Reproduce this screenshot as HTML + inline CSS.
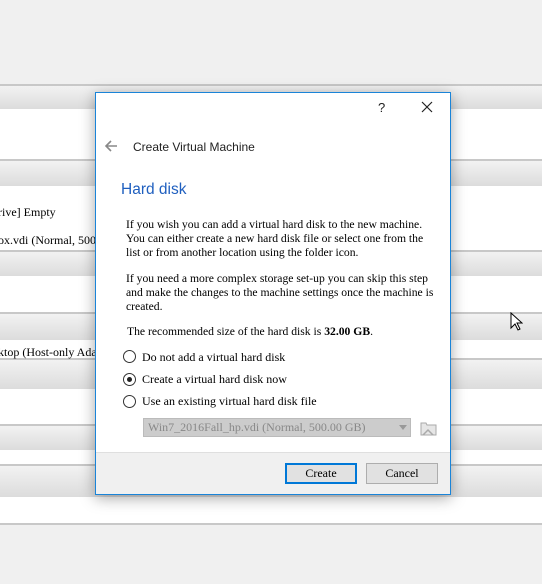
<!DOCTYPE html>
<html><head><style>
*{margin:0;padding:0;box-sizing:border-box}
body{width:542px;height:584px;background:#f0f0f0;position:relative;overflow:hidden;font-family:"Liberation Serif",serif;font-size:12px;color:#000}
.w{position:absolute;left:0;width:542px;background:#fff}
.b{position:absolute;left:0;width:542px;border-top:2px solid #c8c8c8;background:linear-gradient(#f2f2f2,#dcdcdc)}
.t{position:absolute;left:0;font-size:12px;white-space:nowrap}
.dlg{position:absolute;left:95px;top:92px;width:356px;height:403px;background:#fff;border:1px solid #1a84d8;box-shadow:0 3px 14px rgba(0,0,0,.35)}
.foot{position:absolute;left:0;right:0;bottom:0;height:42px;background:#f0f0f0;border-top:1px solid #dfdfdf}
.btn{position:absolute;top:10px;width:72px;height:21px;background:#e1e1e1;border:1px solid #adadad;text-align:center;line-height:19px;font-size:12px}
.r{position:absolute;left:27px;width:13px;height:13px;border:1px solid #333;border-radius:50%;background:#fff}
.rl{position:absolute;left:46px;white-space:nowrap}
p{position:absolute;left:30px;line-height:14px;white-space:nowrap;font-size:11.65px}
</style></head><body>
<div class="w" style="top:0;height:84px;background:#f0f0f0"></div>
<div class="b" style="top:84px;height:25px"></div><div class="w" style="top:109px;height:50px"></div>
<div class="b" style="top:159px;height:27px"></div><div class="w" style="top:186px;height:64px"></div>
<div class="b" style="top:250px;height:26px"></div><div class="w" style="top:276px;height:36px"></div>
<div class="b" style="top:312px;height:28px"></div><div class="w" style="top:340px;height:18px"></div>
<div class="b" style="top:358px;height:31px"></div><div class="w" style="top:389px;height:35px"></div>
<div class="b" style="top:424px;height:26px"></div><div class="w" style="top:450px;height:14px"></div>
<div class="b" style="top:464px;height:33px"></div><div class="w" style="top:497px;height:26px"></div>
<div class="w" style="top:523px;height:2px;background:#c8c8c8"></div>
<div class="t" style="top:205px;left:-2px">rive] Empty</div>
<div class="t" style="top:233px;left:-2px">ox.vdi (Normal, 500</div>
<div class="t" style="top:345px;left:-2px">ktop (Host-only Ada</div>
<svg style="position:absolute;left:510px;top:312px" width="13" height="20" viewBox="0 0 13 20"><path d="M1 1v15l4-4 3 6 2-1-3-6h5z" fill="#fff" stroke="#000"/></svg>
<div class="dlg">
<div style="position:absolute;left:282px;top:7px;font-family:'Liberation Sans',sans-serif;font-size:13px;color:#222">?</div>
<svg style="position:absolute;left:325px;top:8px" width="12" height="12"><path d="M1 1L11 11M11 1L1 11" stroke="#222" stroke-width="1.2"/></svg>
<svg style="position:absolute;left:8px;top:47px" width="14" height="12"><path d="M13 6H2M7 1L2 6l5 5" stroke="#888" stroke-width="1.6" fill="none"/></svg>
<div style="position:absolute;left:37px;top:47px;font-family:'Liberation Sans',sans-serif;font-size:12px;color:#222">Create Virtual Machine</div>
<div style="position:absolute;left:25px;top:88px;font-family:'Liberation Sans',sans-serif;font-size:15.5px;color:#1f5fbf">Hard disk</div>
<p style="top:125px">If you wish you can add a virtual hard disk to the new machine.<br>You can either create a new hard disk file or select one from the<br>list or from another location using the folder icon.</p>
<p style="top:179px">If you need a more complex storage set-up you can skip this step<br>and make the changes to the machine settings once the machine is<br>created.</p>
<p style="top:232px;left:31px">The recommended size of the hard disk is <b>32.00 GB</b>.</p>
<div class="r" style="top:257px"></div><div class="rl" style="top:257px">Do not add a virtual hard disk</div>
<div class="r" style="top:280px"><div style="position:absolute;left:3px;top:3px;width:5px;height:5px;border-radius:50%;background:#222"></div></div><div class="rl" style="top:279px">Create a virtual hard disk now</div>
<div class="r" style="top:302px"></div><div class="rl" style="top:301px">Use an existing virtual hard disk file</div>
<div style="position:absolute;left:47px;top:325px;width:268px;height:19px;background:#ccc;border:1px solid #bbb;color:#888;padding-left:4px;line-height:17px">Win7_2016Fall_hp.vdi (Normal, 500.00 GB)</div>
<svg style="position:absolute;left:303px;top:332px" width="8" height="5"><path d="M0 0h8L4 5z" fill="#999"/></svg>
<svg style="position:absolute;left:324px;top:327px" width="17" height="16"><path d="M1 3h5l1 2h9v10H1z" fill="#e6e6e6" stroke="#aaa"/><path d="M3 15l5-5 5 5" fill="none" stroke="#aaa" stroke-width="1.5"/></svg>
<div class="foot">
<div class="btn" style="left:189px;border:2px solid #0078d7;line-height:17px">Create</div>
<div class="btn" style="left:270px">Cancel</div>
</div>
</div>
</body></html>
